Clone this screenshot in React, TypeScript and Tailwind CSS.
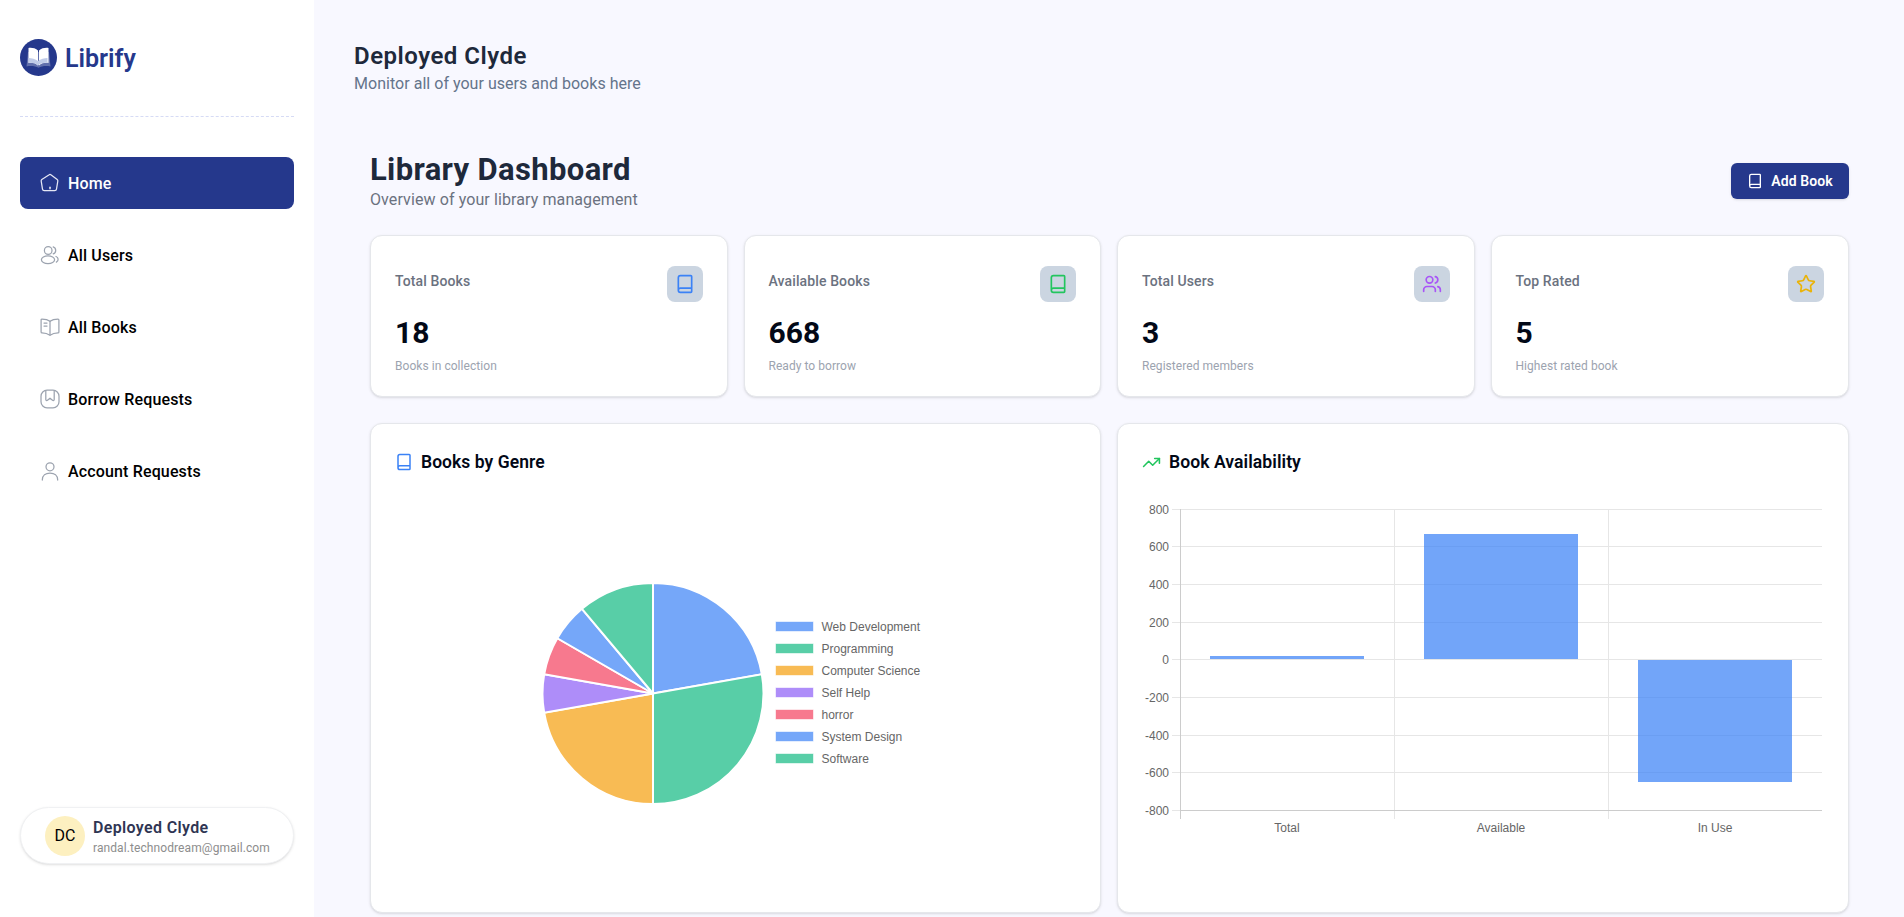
import React from "react";
import { Book, Users, Star, TrendingUp } from "lucide-react";

const pieData: [number, string, string][] = [
  [4, "#75a7f9", "Web Development"],
  [5, "#58cea7", "Programming"],
  [4, "#f8bb54", "Computer Science"],
  [1, "#ae8df9", "Self Help"],
  [1, "#f7798e", "horror"],
  [1, "#75a7f9", "System Design"],
  [2, "#58cea7", "Software"],
];

function pieSlices() {
  const cx = 654;
  const cy = 694.5;
  const r = 110.5;
  let start = 0;
  return pieData.map(([v, color, label]) => {
    const a0 = ((start - 90) * Math.PI) / 180;
    const end = start + v * 20;
    const a1 = ((end - 90) * Math.PI) / 180;
    const large = v * 20 > 180 ? 1 : 0;
    const d = `M${cx} ${cy}L${cx + r * Math.cos(a0)} ${cy + r * Math.sin(a0)}A${r} ${r} 0 ${large} 1 ${cx + r * Math.cos(a1)} ${cy + r * Math.sin(a1)}Z`;
    start = end;
    return <path key={label} d={d} fill={color} stroke="#fff" strokeWidth={2} />;
  });
}

const HomeIcon = () => (
  <svg width="20" height="20" viewBox="0 0 20 20" fill="none" stroke="currentColor" strokeWidth="1.25" strokeLinejoin="round" strokeLinecap="round">
    <path d="M8.800 1.900a2 2 0 0 1 2.400 0l6 4.600a1.600 1.600 0 0 1 .6 1.600l-1.300 8a1.800 1.800 0 0 1-1.800 1.600H4.300a1.800 1.800 0 0 1-1.800-1.600l-1.300-8a1.600 1.600 0 0 1 .6-1.600Z" />
    <path d="M10 14.200v1.600" strokeWidth="1.500" />
  </svg>
);
const UsersIcon = () => (
  <svg width="20" height="20" viewBox="0 0 20 20" fill="none" stroke="currentColor" strokeWidth="1.25" strokeLinecap="round">
    <circle cx="8.200" cy="5.500" r="3.800" />
    <ellipse cx="8" cy="14.800" rx="6.600" ry="3.900" />
    <path d="M13.200 1.900a3.700 3.700 0 0 1 0 7" />
    <path d="M16 11.500c2.600 1 2.900 4.200.4 5.600" />
  </svg>
);
const BooksIcon = () => (
  <svg width="20" height="20" viewBox="0 0 20 20" fill="none" stroke="currentColor" strokeWidth="1.25" strokeLinecap="round" strokeLinejoin="round">
    <path d="M10 4.300C8 2.700 5 2 2 2a.9.9 0 0 0-.9.9v12c0 .5.4.9.9.9 3 0 5.600.7 8 2.400 2.400-1.700 5-2.400 8-2.400a.9.900 0 0 0 .9-.9v-12A.9.900 0 0 0 18 2c-3 0-6 .7-8 2.300Z" />
    <path d="M10 4.300v13.800" />
    <path d="M4 6h3M4 9h3" />
  </svg>
);
const BorrowIcon = () => (
  <svg width="20" height="20" viewBox="0 0 20 20" fill="none" stroke="currentColor" strokeWidth="1.25" strokeLinejoin="round">
    <path d="M7 1.200h6a6 6 0 0 1 6 6v5.600a6 6 0 0 1-6 6H7a6 6 0 0 1-6-6V7.200a6 6 0 0 1 6-6Z" />
    <path d="M5.800 1.600v8.800c0 1.100 1 1.500 1.700.9L10 9.200l2.500 2.100c.7.600 1.700.2 1.700-.9V1.600" />
  </svg>
);
const AccountIcon = () => (
  <svg width="20" height="20" viewBox="0 0 20 20" fill="none" stroke="currentColor" strokeWidth="1.25" strokeLinecap="round">
    <circle cx="10" cy="5.800" r="4" />
    <path d="M2.300 19c0-4.500 3.400-7 7.700-7s7.700 2.500 7.700 7" />
  </svg>
);

const nav = [
  { label: "Home", icon: <HomeIcon />, active: true },
  { label: "All Users", icon: <UsersIcon /> },
  { label: "All Books", icon: <BooksIcon /> },
  { label: "Borrow Requests", icon: <BorrowIcon /> },
  { label: "Account Requests", icon: <AccountIcon /> },
];

const stats = [
  { label: "Total Books", value: "18", note: "Books in collection", icon: <Book size={20} strokeWidth={2} className="text-[#3b82f6]" /> },
  { label: "Available Books", value: "668", note: "Ready to borrow", icon: <Book size={20} strokeWidth={2} className="text-[#22c55e]" /> },
  { label: "Total Users", value: "3", note: "Registered members", icon: <Users size={20} strokeWidth={2} className="text-[#a855f7]" /> },
  { label: "Top Rated", value: "5", note: "Highest rated book", icon: <Star size={20} strokeWidth={2} className="text-[#eab308]" /> },
];

const yTicks: [string, number][] = [
  ["800", 510.5],
  ["600", 547.5],
  ["400", 585.5],
  ["200", 623.5],
  ["0", 660.5],
  ["-200", 698.5],
  ["-400", 736.5],
  ["-600", 773.5],
  ["-800", 811.5],
];

function BarChart() {
  return (
    <svg width="683" height="350" viewBox="1142 490 683 350" className="block [font-family:'Liberation_Sans',Arial,sans-serif]">
      {yTicks.map(([t, y]) => (
        <g key={t}>
          <line x1="1172" x2="1822" y1={y} y2={y} stroke="#e6e6e6" />
          <text x="1169" y={y + 4} textAnchor="end" fontSize="12" fill="#666">{t}</text>
        </g>
      ))}
      {[1394.5, 1608.5].map((x) => (
        <line key={x} x1={x} x2={x} y1="510" y2="820" stroke="#e6e6e6" />
      ))}
      <line x1="1180.5" x2="1180.5" y1="510" y2="820" stroke="#ccc" />
      <line x1="1180" x2="1822" y1="811.5" y2="811.5" stroke="#ccc" />
      <rect x="1210" y="657" width="154" height="3" fill="rgba(59,130,246,0.72)" />
      <rect x="1424" y="535" width="154" height="125" fill="rgba(59,130,246,0.72)" />
      <rect x="1638" y="661" width="154" height="122" fill="rgba(59,130,246,0.72)" />
      {[["Total", 1287], ["Available", 1501], ["In Use", 1715]].map(([l, x]) => (
        <text key={l as string} x={x as number} y="833" textAnchor="middle" fontSize="12" fill="#666">{l}</text>
      ))}
    </svg>
  );
}

function PieChart() {
  return (
    <svg width="680" height="350" viewBox="396 490 680 350" className="block [font-family:'Liberation_Sans',Arial,sans-serif]">
      {pieSlices()}
      {pieData.map(([, color, label], i) => {
        const y = 628 + i * 22;
        return (
          <g key={label}>
            <rect x="776.500" y={y - 5.500} width="38" height="10" fill={color} stroke="#fff" strokeOpacity="0.6" strokeWidth="1" />
            <text x="822.500" y={y + 4} fontSize="12" fill="#666">{label}</text>
          </g>
        );
      })}
    </svg>
  );
}

export default function App() {
  return (
    <div className="flex h-screen overflow-hidden bg-[#f8f8ff] text-black [font-family:Roboto,sans-serif]">
      <aside className="flex w-[314px] shrink-0 flex-col justify-between bg-white px-5 pb-[53px] pt-[39px]">
        <div>
          <div className="flex items-center gap-2 border-b border-dashed border-[#d6dbf5] pb-10">
            <svg width="37" height="37" viewBox="0 0 37 37" className="shrink-0">
              <circle cx="18.500" cy="18.500" r="18.500" fill="#25388c" />
              <path d="M18 11.500C15.500 9 11 8.500 8.500 9v15c3-.4 7 0 9.500 2.500Z" fill="#fff" />
              <path d="M19 11.500C21.500 9 26 8.500 28.500 9v15c-3-.4-7 0-9.500 2.500Z" fill="#fff" />
              <path d="M8 13 6.500 27.500c4-.8 9-.5 12 1.300 3-1.800 8-2.100 12-1.300L29 13" fill="#ffffff" fillOpacity="0.28" />
              <path d="M8.500 19v5c3-.4 7 0 9.500 2.500 2.500-2.500 6.500-2.900 9.500-2.500v-5c-3 0-7 1-9.500 3-2.500-2-6.500-3-9.500-3Z" fill="#c0cbe8" />
            </svg>
            <span className="pt-[2px] text-[25px] font-semibold leading-8 text-[#25388c]">Librify</span>
          </div>
          <nav className="mt-10 flex flex-col gap-5">
            {nav.map((n) => (
              <div
                key={n.label}
                className={`flex h-[52px] items-center gap-2 rounded-lg px-5 text-base font-medium tracking-[0.15px] ${n.active ? "bg-[#25388c] text-white" : "text-black"}`}
              >
                <span className={n.active ? "text-[#e5e7f5]" : "text-[#9ca3af]"}>{n.icon}</span>
                <span className="pt-[2px]">{n.label}</span>
              </div>
            ))}
          </nav>
        </div>
        <div className="flex h-[57px] items-center gap-2 rounded-full border border-[#f0f1f3] bg-white pl-6 shadow-sm">
          <div className="flex size-10 items-center justify-center rounded-full bg-[#fdf0c0] pt-[1px] text-base text-black">DC</div>
          <div className="flex flex-col pt-[2px]">
            <span className="text-base font-semibold leading-5 tracking-[0.35px] text-[#2f3553]">Deployed Clyde</span>
            <span className="mt-[2px] text-xs leading-4 tracking-[0.09px] text-[#8d8d8d]">randal.technodream@gmail.com</span>
          </div>
        </div>
      </aside>
      <main className="min-w-0 flex-1 px-10 pt-10">
        <h2 className="text-2xl font-semibold leading-8 tracking-[0.5px] text-[#1e293b]">Deployed Clyde</h2>
        <p className="text-base leading-6 tracking-[0.03px] text-[#64748b]">Monitor all of your users and books here</p>
        <section className="mt-[39px] py-4 pl-4 pr-[15px]">
          <div className="mb-[23px] flex items-start justify-between">
            <div className="pt-[1px]">
              <h1 className="text-[31px] font-bold leading-9 tracking-[0.35px] text-[#1e293b]">Library Dashboard</h1>
              <p className="text-base leading-6 tracking-[0.1px] text-[#6b7280]">Overview of your library management</p>
            </div>
            <div className="mt-3 flex h-9 w-[118px] items-center justify-center gap-2 rounded-md bg-[#25388c] text-sm font-semibold tracking-[0.1px] text-white shadow-sm">
              <Book size={16} strokeWidth={2} />
              Add Book
            </div>
          </div>
          <div className="mb-[26px] grid grid-cols-[357.5px_357.5px_357.5px_358.5px] gap-4">
            {stats.map((s) => (
              <div key={s.label} className="h-[162px] rounded-xl border border-[#e5e7eb] bg-white px-6 pt-[30px] shadow-sm">
                <div className="flex items-start justify-between">
                  <span className="mt-[5px] text-sm font-medium leading-5 tracking-[0.12px] text-[#6b7280]">{s.label}</span>
                  <div className="flex size-9 items-center justify-center rounded-lg bg-[#cbd5e1]">{s.icon}</div>
                </div>
                <div className="mt-[13px] text-3xl font-bold leading-9 text-[#020817]">{s.value}</div>
                <div className="mt-[7px] text-xs leading-4 tracking-[0.05px] text-[#9ca3af]">{s.note}</div>
              </div>
            ))}
          </div>
          <div className="grid grid-cols-[731px_732px] gap-4">
            <div className="h-[490px] rounded-xl border border-[#e5e7eb] bg-white p-6 shadow-sm">
              <div className="flex items-center gap-2 text-[17.5px] font-semibold leading-7 tracking-[0.05px] text-[#020817]">
                <Book size={18} className="text-[#3b82f6]" />
                Books by Genre
              </div>
              <div className="mt-[13px]"><PieChart /></div>
            </div>
            <div className="h-[490px] rounded-xl border border-[#e5e7eb] bg-white p-6 shadow-sm">
              <div className="flex items-center gap-2 text-[17.6px] font-semibold leading-7 tracking-[0.05px] text-[#020817]">
                <TrendingUp size={19} className="text-[#22c55e]" />
                Book Availability
              </div>
              <div className="mt-[13px]"><BarChart /></div>
            </div>
          </div>
        </section>
      </main>
    </div>
  );
}
